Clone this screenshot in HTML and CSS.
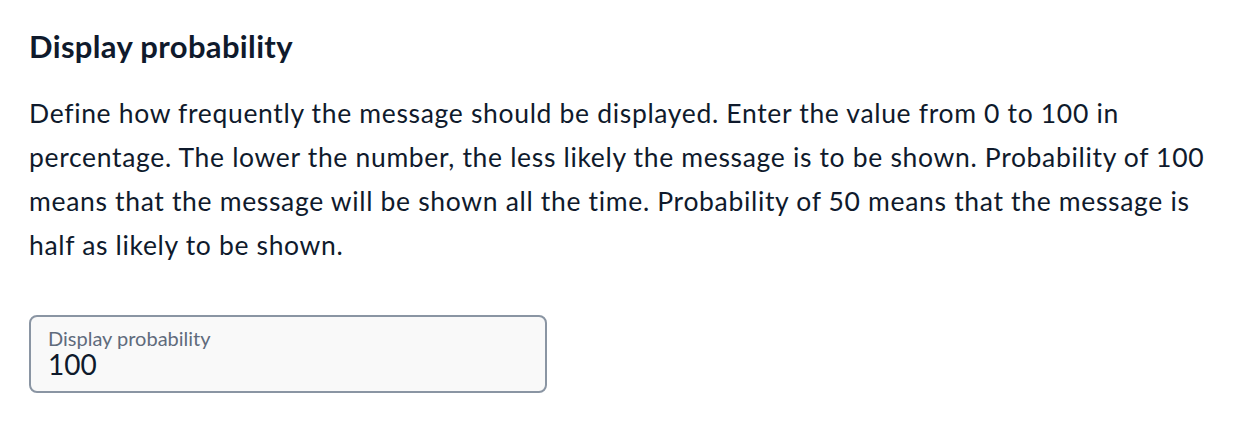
FILE: index.html
```html
<!DOCTYPE html>
<html lang="en">
<head>
    <meta charset="UTF-8">
    <meta name="viewport" content="width=device-width, initial-scale=1.0">
    <title>Display probability</title>
    <link rel="stylesheet" href="styles.css">
</head>
<body>

    <section class="setting">
        <h1>Display probability</h1>
        <p>Define how frequently the message should be displayed. Enter the value from 0 to 100 in percentage. The lower the number, the less likely the message is to be shown. Probability of 100 means that the message will be shown all the time. Probability of 50 means that the message is half as likely to be shown.</p>

        <label class="field">
            <span class="field-label">Display probability</span>
            <input class="field-input" type="text" value="100">
        </label>
    </section>

</body>
</html>
```

FILE: styles.css
```css
body {
    font-family: Lato, "Open Sans", sans-serif;
    margin: 0;
    padding: 28px 29px;
    background-color: #ffffff;
    color: #0f1a2c;
}
h1 {
    font-size: 31px;
    font-weight: 700;
    line-height: 36px;
    letter-spacing: 0.35px;
    margin: 0;
}
p {
    font-size: 26.5px;
    line-height: 44px;
    letter-spacing: 0.67px;
    margin: 27px 0 0;
}
.field {
    display: flex;
    flex-direction: column;
    box-sizing: border-box;
    width: 518px;
    height: 78px;
    margin-top: 48px;
    padding: 10px 17px;
    border: 2px solid #8a95a3;
    border-radius: 8px;
    background: #f9f9f9;
}
.field-label {
    font-size: 20px;
    line-height: 22px;
    color: #5f6b7c;
}
.field-input {
    font-family: inherit;
    font-size: 28px;
    line-height: 30px;
    color: #0f1a2c;
    border: none;
    background: transparent;
    padding: 0;
    margin: 0;
    outline: none;
}
```
